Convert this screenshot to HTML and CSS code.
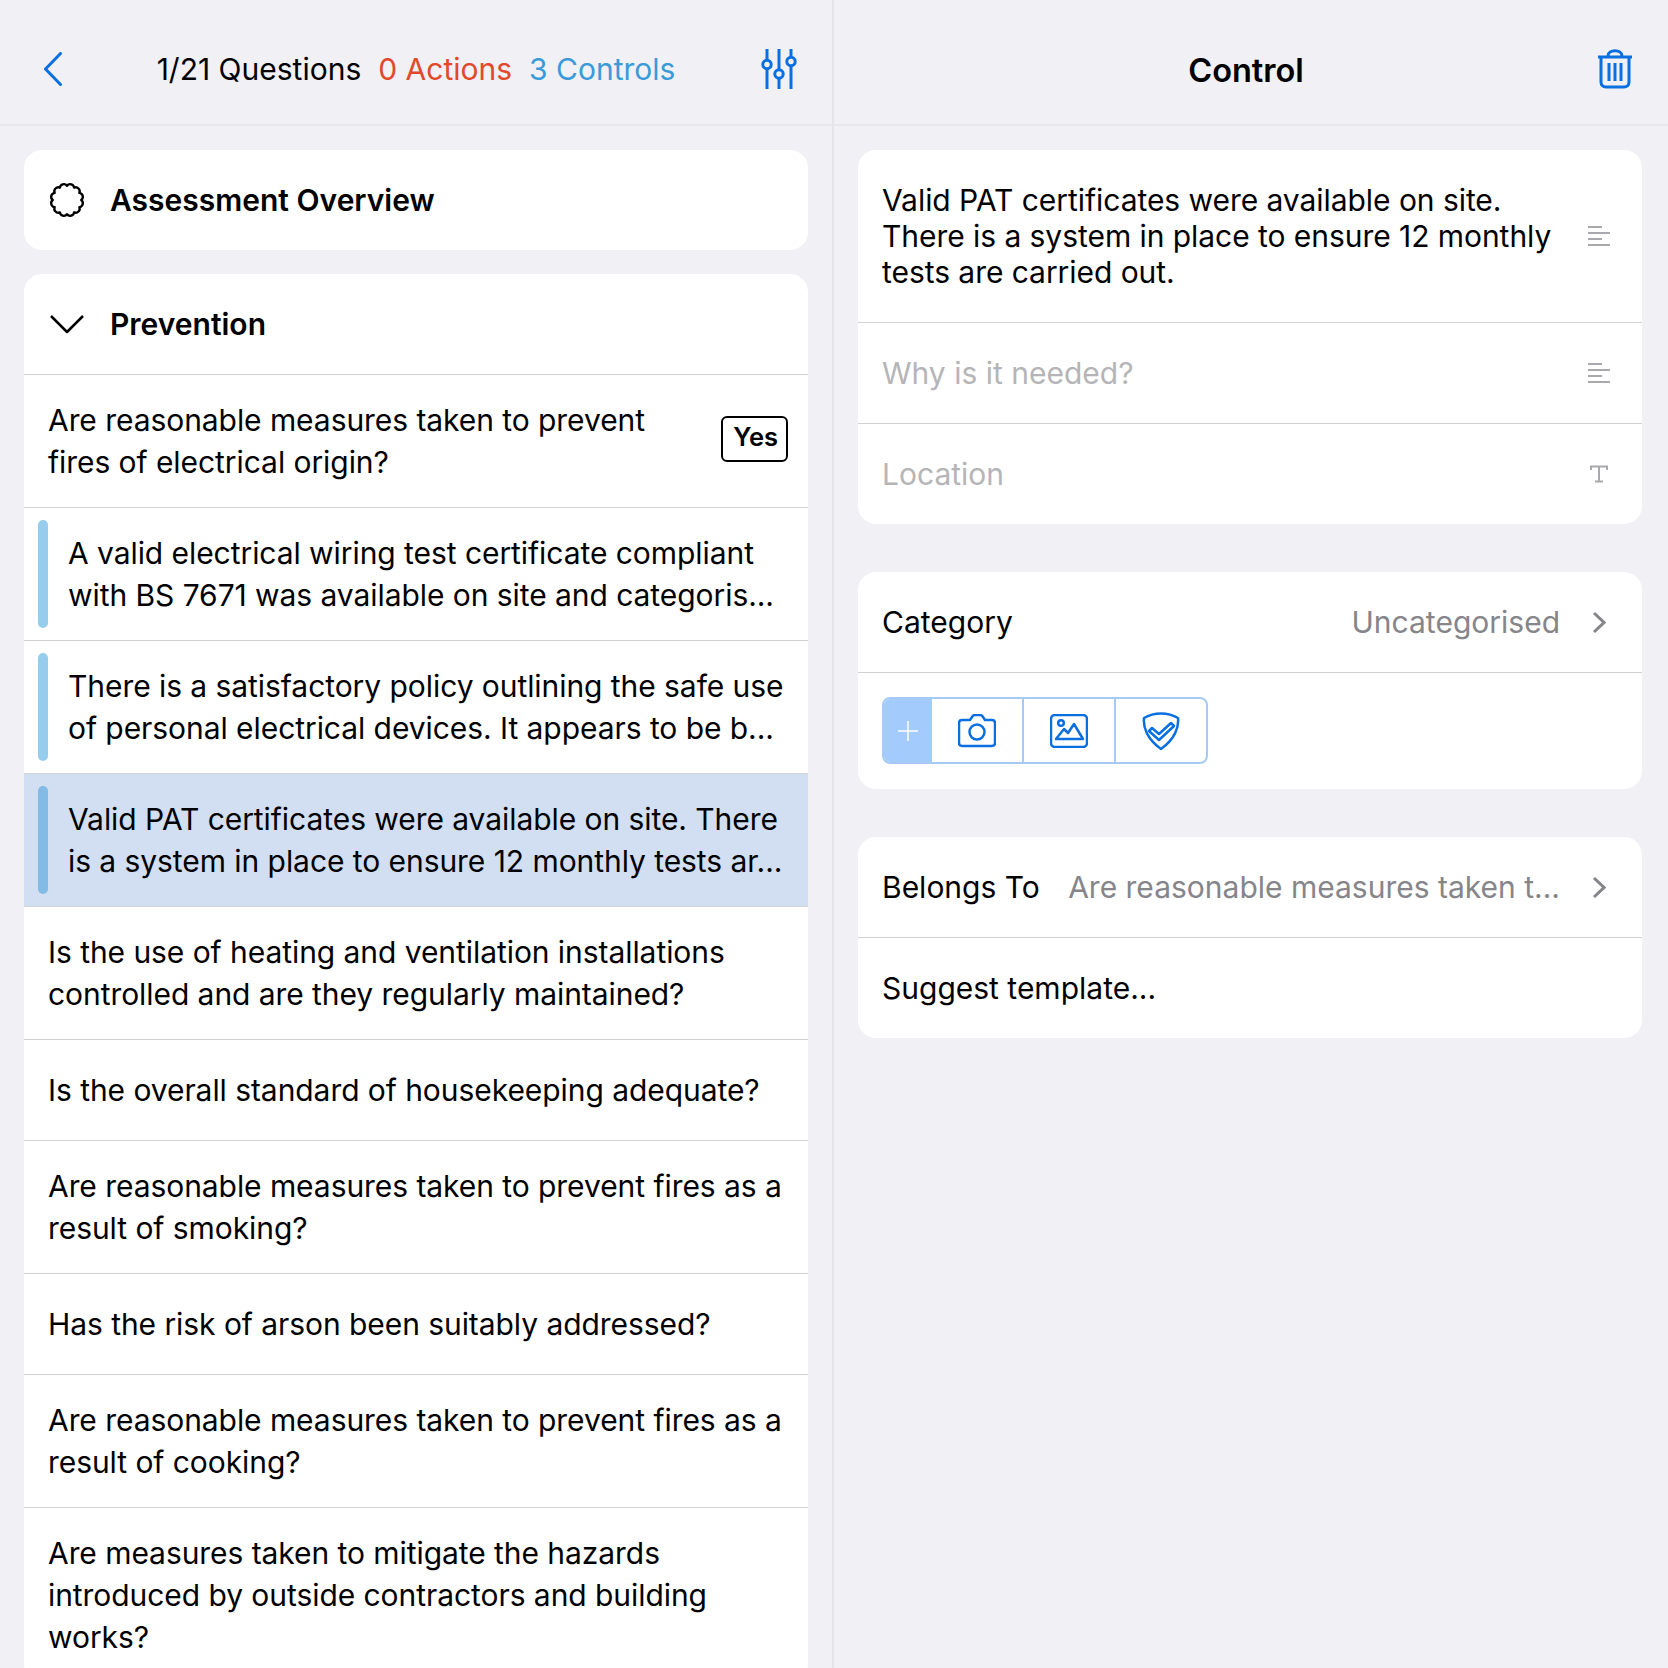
FILE: index.html
```html
<!DOCTYPE html>
<html>
<head>
    <title>Control</title>
    <link rel="stylesheet" href="styles.css">
</head>
<body>
    <div class="app">
        <div class="panel panel-left">
            <div class="nav-bar">
                <svg class="icon-back" width="18" height="34" viewBox="0 0 18 34"><path d="M16.5 1.5 1.500 17l15 15.500"/></svg>
                <div class="nav-stats">
                    <span>1/21 Questions</span>
                    <span class="stat-actions">0 Actions</span>
                    <span class="stat-controls">3 Controls</span>
                </div>
                <svg class="icon-blue icon-end" width="36" height="40" viewBox="0 0 36 40">
                    <path d="M6 0v11M6 20v20M18 0v20M18 30v10M30 0v8M30 17v23"/>
                    <circle cx="6" cy="15.5" r="4.2"/><circle cx="18" cy="25" r="4.2"/><circle cx="30" cy="12.5" r="4.2"/>
                </svg>
            </div>
            <div class="content">
                <div class="card">
                    <div class="section-row">
                        <svg class="section-icon" width="38" height="38" viewBox="0 0 40 40"><path d="M20 5A4.200 4.200 0 0 1 27.500 7A4.200 4.200 0 0 1 33 12.500A4.200 4.200 0 0 1 35 20A4.200 4.200 0 0 1 33 27.500A4.200 4.200 0 0 1 27.500 33A4.200 4.200 0 0 1 20 35A4.200 4.200 0 0 1 12.500 33A4.200 4.200 0 0 1 7 27.500A4.200 4.200 0 0 1 5 20A4.200 4.200 0 0 1 7 12.500A4.200 4.200 0 0 1 12.500 7A4.200 4.200 0 0 1 20 5Z"/></svg>
                        <span>Assessment Overview</span>
                    </div>
                </div>
                <div class="card">
                    <div class="section-row">
                        <svg class="section-icon" width="38" height="38" viewBox="0 0 38 38"><path d="M3 11l16 16 16-16"/></svg>
                        <span>Prevention</span>
                    </div>
                    <div class="row">
                        <span>Are reasonable measures taken to prevent<br>fires of electrical origin?</span>
                        <span class="answer">Yes</span>
                    </div>
                    <div class="row row-control"><span>A valid electrical wiring test certificate compliant<br>with BS 7671 was available on site and categoris...</span></div>
                    <div class="row row-control"><span>There is a satisfactory policy outlining the safe use<br>of personal electrical devices. It appears to be b...</span></div>
                    <div class="row row-control row-selected"><span>Valid PAT certificates were available on site. There<br>is a system in place to ensure 12 monthly tests ar...</span></div>
                    <div class="row"><span>Is the use of heating and ventilation installations<br>controlled and are they regularly maintained?</span></div>
                    <div class="row"><span>Is the overall standard of housekeeping adequate?</span></div>
                    <div class="row"><span>Are reasonable measures taken to prevent fires as a<br>result of smoking?</span></div>
                    <div class="row"><span>Has the risk of arson been suitably addressed?</span></div>
                    <div class="row"><span>Are reasonable measures taken to prevent fires as a<br>result of cooking?</span></div>
                    <div class="row"><span>Are measures taken to mitigate the hazards<br>introduced by outside contractors and building<br>works?</span></div>
                </div>
            </div>
        </div>

        <div class="panel panel-right">
            <div class="nav-bar">
                <span></span>
                <div class="nav-title">Control</div>
                <svg class="icon-blue icon-end" width="36" height="40" viewBox="0 0 36 40">
                    <path d="M1 8h34M11 7c0-7 14-7 14 0M4 9v24c0 3 2 5 5 5h18c3 0 5-2 5-5V9M12 14v18M18 14v18M24 14v18"/>
                </svg>
            </div>
            <div class="content">
                <div class="card">
                    <div class="field field-text">
                        <span>Valid PAT certificates were available on site.<br>There is a system in place to ensure 12 monthly<br>tests are carried out.</span>
                        <svg class="field-icon" width="22" height="20" viewBox="0 0 22 20"><path d="M0 1h14M0 7h22M0 13h14M0 19h22"/></svg>
                    </div>
                    <div class="field field-empty">
                        <span>Why is it needed?</span>
                        <svg class="field-icon" width="22" height="20" viewBox="0 0 22 20"><path d="M0 1h14M0 7h22M0 13h14M0 19h22"/></svg>
                    </div>
                    <div class="field field-empty">
                        <span>Location</span>
                        <svg class="field-icon" width="22" height="18" viewBox="0 0 22 18"><path d="M3 5V1.500h16V5M11 1.500V16.500M7 16.500h8"/></svg>
                    </div>
                </div>

                <div class="card card-gap">
                    <div class="field">
                        <span>Category</span>
                        <span class="field-value">Uncategorised</span>
                        <svg class="chevron" width="14" height="23" viewBox="0 0 14 23"><path d="M2 2l10 9.500L2 21"/></svg>
                    </div>
                    <div class="tools-row">
                        <div class="tools">
                            <div class="tool-add"><svg width="20" height="20" viewBox="0 0 20 20"><path d="M10 0v20M0 10h20"/></svg></div>
                            <div class="tool">
                                <svg width="38" height="34" viewBox="0 0 38 34"><path d="M12 6l2-3c.6-1 1.500-2 3-2h5c1.500 0 2.400 1 3 2l2 3h7c2 0 3 1 3 3v20c0 2-1 3-3 3H4c-2 0-3-1-3-3V9c0-2 1-3 3-3z"/><circle cx="19" cy="18" r="7.500"/></svg>
                            </div>
                            <div class="tool">
                                <svg width="38" height="34" viewBox="0 0 38 34"><rect x="1" y="1" width="36" height="32" rx="4"/><circle cx="11" cy="9" r="2.800"/><path d="M6 25l8-10 4 4 6-9 9 15z"/></svg>
                            </div>
                            <div class="tool">
                                <svg width="38" height="38" viewBox="0 0 38 38"><path d="M19 1.500c6 0 12 1.500 17 4.500 1 9-3 21-17 31C5 27 1 15 2 6c5-3 11-4.500 17-4.500z"/><path d="M10 16l7 6 12-11 3 3-15 14-10-9z"/></svg>
                            </div>
                        </div>
                    </div>
                </div>

                <div class="card card-gap">
                    <div class="field">
                        <span>Belongs To</span>
                        <span class="field-value">Are reasonable measures taken t...</span>
                        <svg class="chevron" width="14" height="23" viewBox="0 0 14 23"><path d="M2 2l10 9.500L2 21"/></svg>
                    </div>
                    <div class="field"><span>Suggest template...</span></div>
                </div>
            </div>
        </div>
    </div>
</body>
</html>
```

FILE: styles.css
```css
* {
    box-sizing: border-box;
}

html, body {
    margin: 0;
    height: 100%;
}

body {
    background: #f0f0f5;
    color: #000;
    font-family: Inter, "Noto Sans", sans-serif;
    font-size: 30px;
    overflow: hidden;
}

svg {
    display: block;
    fill: none;
    flex-shrink: 0;
}

.app {
    display: grid;
    grid-template-columns: 834px 834px;
    height: 1668px;
    overflow: hidden;
}

.panel-left {
    border-right: 2px solid #e4e4e9;
}

.nav-bar {
    display: grid;
    grid-template-columns: 1fr auto 1fr;
    align-items: center;
    height: 126px;
    padding: 13px 35px 0;
    border-bottom: 2px solid #e8e8ed;
}

.panel-right .nav-bar {
    padding-left: 25px;
}

.panel-right .content {
    padding-right: 26px;
}

.nav-stats {
    display: flex;
    gap: 17px;
}

.nav-title {
    font-size: 32.500px;
    font-weight: 600;
    padding-top: 3px;
}

.stat-actions {
    color: #e2492b;
}

.stat-controls {
    color: #3b9ad9;
}

.icon-back {
    margin-left: 9px;
    stroke: #0a6fe0;
    stroke-width: 3;
    stroke-linecap: round;
    stroke-linejoin: round;
}

.icon-blue {
    stroke: #0a6fe0;
    stroke-width: 3;
}

.icon-end {
    justify-self: end;
}

.content {
    display: flex;
    flex-direction: column;
    gap: 24px;
    padding: 24px;
}

.card {
    background: #fff;
    border-radius: 18px;
    overflow: hidden;
}

.card-gap {
    margin-top: 24px;
}

.section-row {
    display: flex;
    align-items: center;
    gap: 24px;
    height: 100px;
    padding-left: 24px;
    font-weight: 600;
}

.section-icon {
    stroke: #000;
    stroke-width: 2.500;
    stroke-linejoin: round;
}

.row {
    display: flex;
    align-items: center;
    justify-content: space-between;
    min-height: 101px;
    padding: 24px 20px 24px 24px;
    border-top: 1px solid #d2d2d6;
    line-height: 42px;
    letter-spacing: -0.06px;
    white-space: nowrap;
}

.row-control {
    position: relative;
    padding-left: 44px;
}

/* colour bar on the rows that are controls */
.row-control::before {
    content: "";
    position: absolute;
    left: 14px;
    top: 12px;
    bottom: 12px;
    width: 10px;
    border-radius: 5px;
    background: #96cdec;
}

.row-selected {
    background: #d2dff2;
}

.row-selected::before {
    background: #82bce6;
}

.answer {
    height: 46px;
    margin-top: -4px;
    border: 2px solid #000;
    border-radius: 6px;
    padding: 0 8px 0 10px;
    font-size: 25.500px;
    font-weight: 600;
    line-height: 38px;
    letter-spacing: 0;
}

.field {
    display: flex;
    align-items: center;
    justify-content: space-between;
    height: 101px;
    padding: 0 24px;
    white-space: nowrap;
}

.field:first-child {
    height: 100px;
}

.field + .field,
.tools-row {
    border-top: 1px solid #d2d2d6;
}

.field-text,
.field-text:first-child {
    height: 172px;
    line-height: 36px;
    letter-spacing: -0.05px;
}

.field-empty {
    color: #b5b5b8;
}

.field-icon {
    stroke: #a9a9ad;
    stroke-width: 2;
    margin-right: 8px;
}

.field-value {
    margin-left: auto;
    margin-right: 32px;
    color: #85858a;
}

.chevron {
    stroke: #85858a;
    stroke-width: 3;
    margin-right: 12px;
}

.tools-row {
    padding: 24px 24px 25px;
}

.tools {
    display: flex;
    width: 326px;
    height: 67px;
    border: 2px solid #a5cbf5;
    border-radius: 8px;
    overflow: hidden;
}

.tool-add {
    display: flex;
    align-items: center;
    justify-content: center;
    width: 48px;
    background: #a3cbfb;
}

.tool-add svg {
    stroke: #fff;
    stroke-width: 1.500;
}

.tool {
    display: flex;
    align-items: center;
    justify-content: center;
    flex: 1;
    border-left: 2px solid #a5cbf5;
}

.tool-add + .tool {
    border-left: 0;
}

.tool svg {
    stroke: #0a6fe0;
    stroke-width: 2.500;
    stroke-linejoin: round;
}
```
